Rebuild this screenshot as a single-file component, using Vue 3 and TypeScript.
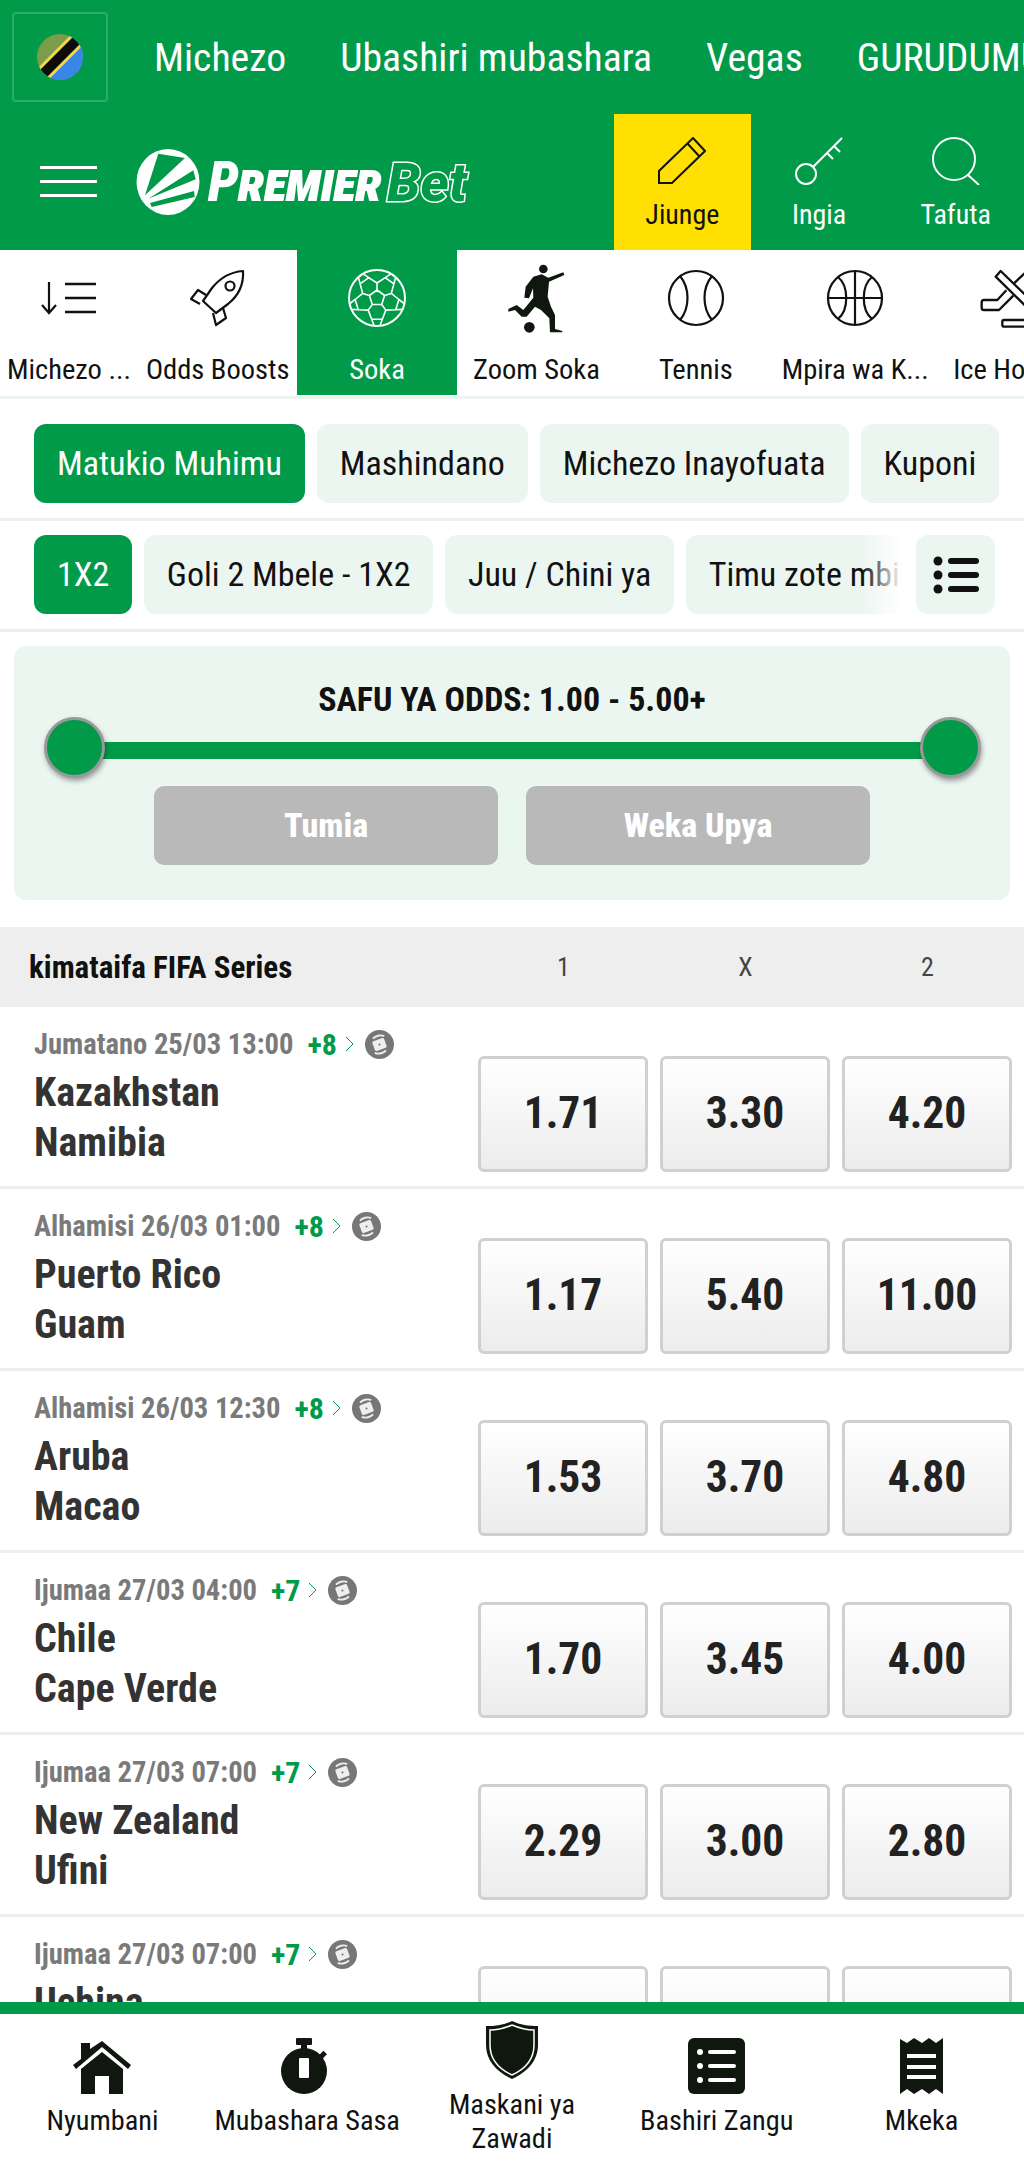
<template>
  <div class="page">
    <!-- top links -->
    <div class="top-links">
      <div class="flag-box">
        <svg width="46" height="46" viewBox="0 0 46 46">
          <defs><clipPath id="flag"><circle cx="23" cy="23" r="23" /></clipPath></defs>
          <g clip-path="url(#flag)">
            <rect width="46" height="46" fill="#7d9c4a" />
            <polygon points="46,0 46,46 0,46" fill="#3a86e8" />
            <line x1="0" y1="46" x2="46" y2="0" stroke="#f2d64b" stroke-width="16" />
            <line x1="0" y1="46" x2="46" y2="0" stroke="#0c0c0c" stroke-width="10" />
          </g>
        </svg>
      </div>
      <span v-for="link in topLinks" :key="link" class="top-link">{{ link }}</span>
    </div>

    <!-- logo row -->
    <div class="brand-row">
      <div class="burger"><i></i><i></i><i></i></div>
      <svg class="logo-mark" width="64" height="66" viewBox="0 0 64 66">
        <ellipse cx="32" cy="33" rx="31.5" ry="33" fill="#fff" />
        <g fill="#009a49">
          <polygon points="22.3,4.7 49,9 9,46.3" />
          <polygon points="57.3,21.3 59.7,30.3 12.3,49.7" />
          <polygon points="58,42 58.7,48 15.7,58 14,54" />
        </g>
      </svg>
      <div class="logo-text"><span class="logo-premier">Premier</span><span class="logo-bet">Bet</span></div>
      <div class="head-actions">
        <div class="head-action join">
          <svg width="48" height="48" viewBox="0 0 48 48" fill="none" stroke="#111" stroke-width="2">
            <path d="M1 46V34L35 1L47 14L14 46Z M29 6L41 19" />
          </svg>
          <span>Jiunge</span>
        </div>
        <div class="head-action">
          <svg width="48" height="48" viewBox="0 0 48 48" fill="none" stroke="#fff" stroke-width="2">
            <circle cx="11" cy="37" r="10" />
            <path d="M18 30L47 1M39 9L45 15M32 16L38 22" />
          </svg>
          <span>Ingia</span>
        </div>
        <div class="head-action">
          <svg width="48" height="48" viewBox="0 0 48 48" fill="none" stroke="#fff" stroke-width="2">
            <circle cx="22" cy="22" r="21" />
            <path d="M36 38L47 48" />
          </svg>
          <span>Tafuta</span>
        </div>
      </div>
    </div>

    <!-- sports strip -->
    <div class="sports">
      <div
        v-for="sport in sports"
        :key="sport.label"
        class="sport"
        :class="{ active: sport.active, first: sport.icon === 'sort' }"
      >
        <svg class="sport-icon" width="60" height="60" viewBox="0 0 60 60" v-html="sportIcons[sport.icon]"></svg>
        <span class="sport-label">{{ sport.label }}</span>
      </div>
    </div>

    <div class="tabs">
      <div v-for="(tab, i) in mainTabs" :key="tab" class="tab" :class="{ on: i === 0 }">{{ tab }}</div>
    </div>

    <div class="tabs markets">
      <div class="market-scroll">
        <div v-for="(tab, i) in marketTabs" :key="tab" class="tab" :class="{ on: i === 0 }">{{ tab }}</div>
      </div>
      <div class="tab list-btn">
        <svg width="46" height="38" viewBox="0 0 46 38" fill="#111">
          <circle cx="5" cy="5" r="4.5" /><circle cx="5" cy="19" r="4.5" /><circle cx="5" cy="33" r="4.5" />
          <rect x="15" y="2" width="31" height="6" rx="3" /><rect x="15" y="16" width="31" height="6" rx="3" /><rect x="15" y="30" width="31" height="6" rx="3" />
        </svg>
      </div>
    </div>

    <!-- odds range -->
    <div class="range-panel">
      <div class="range-title">SAFU YA ODDS: 1.00 - 5.00+</div>
      <div class="slider">
        <div class="track"></div>
        <div class="knob left"></div>
        <div class="knob right"></div>
      </div>
      <div class="range-btns">
        <div class="range-btn">Tumia</div>
        <div class="range-btn">Weka Upya</div>
      </div>
    </div>

    <div class="league">
      <span class="league-name">kimataifa FIFA Series</span>
      <span class="col">1</span><span class="col">X</span><span class="col">2</span>
    </div>

    <div v-for="match in matches" :key="match.home" class="match">
      <div class="match-info">
        <div class="match-meta">
          <span class="when">{{ match.when }}</span>
          <span class="more">{{ match.more }}</span>
          <svg width="9" height="16" viewBox="0 0 9 16" fill="none" stroke="#009a49" stroke-width="1"><path d="M1 1L8 8L1 15" /></svg>
          <svg class="swap" width="29" height="29" viewBox="0 0 28 28">
            <circle cx="14" cy="14" r="14" fill="#777" />
            <g transform="rotate(-20 14 14)">
              <rect x="8" y="9" width="12" height="10" rx="1.5" fill="#eee" />
              <path d="M10 6.5C13 5 18 5 21 8M18 21.5C15 23 10 23 7 20" fill="none" stroke="#eee" stroke-width="1.8" />
              <circle cx="14" cy="14" r="1" fill="#777" />
            </g>
          </svg>
        </div>
        <div class="team">{{ match.home }}</div>
        <div class="team">{{ match.away }}</div>
      </div>
      <div class="odds">
        <div v-for="(odd, i) in match.odds" :key="i" class="odd">{{ odd }}</div>
      </div>
    </div>

    <!-- bottom nav lies over the list -->
    <div class="bottom-nav">
      <div class="nav-item">
        <svg width="58" height="56" viewBox="0 0 58 56" fill="#10170f">
          <path d="M8 2H17V8L29 0L58 24L55 28L29 6L3 28L0 24L8 18Z" transform="translate(0 3)" />
          <path d="M29 14L50 31V56H36V38H22V56H8V31Z" />
        </svg>
        <span>Nyumbani</span>
      </div>
      <div class="nav-item">
        <svg width="56" height="56" viewBox="0 0 56 56" fill="#10170f">
          <rect x="17" y="0" width="16" height="7" rx="1" />
          <rect x="22" y="6" width="6" height="6" />
          <rect x="40" y="15" width="7" height="5" transform="rotate(-45 43 17)" />
          <circle cx="25" cy="33" r="23" />
          <rect x="20" y="20" width="10" height="20" rx="1" fill="#fff" />
        </svg>
        <span>Mubashara Sasa</span>
      </div>
      <div class="nav-item tall">
        <svg width="54" height="58" viewBox="0 0 54 58">
          <path d="M27 0C35 4 44 5 53 5V24C53 40 42 51 27 58C12 51 1 40 1 24V5C10 5 19 4 27 0Z" fill="#10170f" />
          <path d="M27 4C34 7 42 9 49 9V24C49 38 40 48 27 54" fill="none" stroke="#fff" stroke-width="1.5" />
          <path d="M27 4C20 7 12 9 5 9V24C5 38 14 48 27 54" fill="none" stroke="#fff" stroke-width="1.5" />
        </svg>
        <span>Maskani ya<br />Zawadi</span>
      </div>
      <div class="nav-item">
        <svg width="58" height="56" viewBox="0 0 58 56">
          <rect width="57" height="56" rx="6" fill="#10170f" />
          <g fill="#fff">
            <circle cx="12" cy="14" r="3" /><circle cx="12" cy="28" r="3" /><circle cx="12" cy="42" r="3" />
            <rect x="20" y="12" width="28" height="4" rx="2" /><rect x="20" y="26" width="28" height="4" rx="2" /><rect x="20" y="40" width="28" height="4" rx="2" />
          </g>
        </svg>
        <span>Bashiri Zangu</span>
      </div>
      <div class="nav-item">
        <svg width="44" height="56" viewBox="0 0 44 56">
          <path d="M0 1L7 5L14 0L22 5L29 0L36 5L43 0V56L36 51L29 56L22 51L14 56L7 51L0 56Z" fill="#10170f" />
          <g fill="#fff">
            <rect x="7" y="16" width="29" height="4" /><rect x="7" y="27" width="29" height="4" /><rect x="7" y="37" width="29" height="4" />
          </g>
        </svg>
        <span>Mkeka</span>
      </div>
    </div>
  </div>
</template>

<script setup lang="ts">
interface Sport {
  label: string
  icon: string
  active?: boolean
}

interface Match {
  when: string
  more: string
  home: string
  away: string
  odds: string[]
}

const topLinks = ['Michezo', 'Ubashiri mubashara', 'Vegas', 'GURUDUMU']
const mainTabs = ['Matukio Muhimu', 'Mashindano', 'Michezo Inayofuata', 'Kuponi']
const marketTabs = ['1X2', 'Goli 2 Mbele - 1X2', 'Juu / Chini ya', 'Timu zote mbili kufunga']

const sports: Sport[] = [
  { label: 'Michezo ...', icon: 'sort' },
  { label: 'Odds Boosts', icon: 'rocket' },
  { label: 'Soka', icon: 'ball', active: true },
  { label: 'Zoom Soka', icon: 'player' },
  { label: 'Tennis', icon: 'tennis' },
  { label: 'Mpira wa K...', icon: 'basket' },
  { label: 'Ice Hockey', icon: 'hockey' }
]

// soccer ball lines, built from the pentagon corners
const ballPath = () => {
  const pt = (r: number, deg: number) => {
    const a = ((deg - 90) * Math.PI) / 180
    return `${(30 + r * Math.cos(a)).toFixed(1)} ${(30 + r * Math.sin(a)).toFixed(1)}`
  }
  let d = ''
  for (let k = 0; k < 5; k++) {
    const deg = k * 72
    d += `M${pt(8, deg)}L${pt(8, deg + 72)}`
    d += `M${pt(8, deg)}L${pt(15, deg)}`
    d += `M${pt(15, deg)}L${pt(22, deg - 22)}M${pt(15, deg)}L${pt(22, deg + 22)}`
    d += `M${pt(22, deg + 22)}L${pt(22, deg + 50)}`
    d += `M${pt(22, deg + 22)}L${pt(28, deg + 30)}M${pt(22, deg + 50)}L${pt(28, deg + 42)}`
  }
  return d
}

const sportIcons: Record<string, string> = {
  sort: `<g fill="none" stroke="#111" stroke-width="2.2"><path d="M10 14V44M3 37L10 45L17 37"/><path d="M26 16H57M26 30H57M26 44H57" stroke-width="2.6"/></g>`,
  rocket: `<g fill="none" stroke="#111" stroke-width="2.2" stroke-linejoin="round"><path d="M55 3C56 18 50 28 40 36L28 45L15 33L24 20C32 10 42 4 55 3Z"/><circle cx="42" cy="18" r="4.5"/><path d="M18 27L10 22L3 31L12 36M35 40L38 50L28 57L25 45"/></g>`,
  ball: `<g fill="none" stroke="#fff" stroke-width="1.6"><circle cx="30" cy="30" r="28" stroke-width="2"/><path d="${ballPath()}"/></g>`,
  player: `<g transform="translate(-1 -13) scale(.3333)" fill="#10170f"><circle cx="115" cy="42" r="13"/><path d="M85 65L110 58L130 68L175 52L178 60L132 80L128 125L138 155L150 180L150 222L172 228L172 232L135 232L133 190L108 165L90 155L65 185L50 185L30 165L10 170L10 162L35 150L55 165L85 128L84 100L72 130L58 128L62 95Z"/><circle cx="73" cy="217" r="16"/></g>`,
  tennis: `<g fill="none" stroke="#111" stroke-width="2.2"><circle cx="30" cy="30" r="27"/><path d="M14 8C24 20 24 40 14 52M46 8C36 20 36 40 46 52"/></g>`,
  basket: `<g fill="none" stroke="#111" stroke-width="2.2"><circle cx="30" cy="30" r="27"/><path d="M3 30H57M30 3V57M13 9C24 18 24 42 13 51M47 9C36 18 36 42 47 51"/></g>`,
  hockey: `<g transform="translate(-26 -13) scale(.3333)" fill="none" stroke="#111" stroke-width="7" stroke-linejoin="round"><path d="M110 65L125 48L240 160L225 178Z"/><path d="M142 106L115 135H75Q68 135 68 142V158Q68 165 75 165H120L163 122M165 85L215 38"/><rect x="130" y="195" width="110" height="20" rx="5"/></g>`
}

const matches: Match[] = [
  { when: 'Jumatano 25/03 13:00', more: '+8', home: 'Kazakhstan', away: 'Namibia', odds: ['1.71', '3.30', '4.20'] },
  { when: 'Alhamisi 26/03 01:00', more: '+8', home: 'Puerto Rico', away: 'Guam', odds: ['1.17', '5.40', '11.00'] },
  { when: 'Alhamisi 26/03 12:30', more: '+8', home: 'Aruba', away: 'Macao', odds: ['1.53', '3.70', '4.80'] },
  { when: 'Ijumaa 27/03 04:00', more: '+7', home: 'Chile', away: 'Cape Verde', odds: ['1.70', '3.45', '4.00'] },
  { when: 'Ijumaa 27/03 07:00', more: '+7', home: 'New Zealand', away: 'Ufini', odds: ['2.29', '3.00', '2.80'] },
  { when: 'Ijumaa 27/03 07:00', more: '+7', home: 'Uchina', away: 'Curacao', odds: ['', '', ''] }
]
</script>

<style>
body {
  background: #fff;
  overflow: hidden;
}
</style>

<style scoped>
.page {
  position: relative;
  width: 1024px;
  height: 2162px;
  overflow: hidden;
  background: #fff;
  color: #111;
  font-family: "Roboto Condensed", Roboto, "Liberation Sans Narrow", "Liberation Sans", sans-serif;
  font-stretch: 75%;
}

.top-links {
  display: flex;
  align-items: center;
  height: 114px;
  background: #009a49;
  padding: 0 0 0 12px;
  white-space: nowrap;
  overflow: hidden;
  color: #fff;
}

.flag-box {
  flex: none;
  width: 96px;
  height: 90px;
  box-sizing: border-box;
  border: 2px solid rgba(255, 255, 255, 0.18);
  border-radius: 4px;
  display: flex;
  align-items: center;
  justify-content: center;
  margin-right: 46px;
}

.top-link {
  font-size: 39.7px;
  margin-right: 54px;
}

.brand-row {
  display: flex;
  align-items: center;
  height: 136px;
  background: #009a49;
  color: #fff;
}

.burger {
  width: 57px;
  margin-left: 40px;
  margin-right: 39px;
  display: flex;
  flex-direction: column;
  gap: 11px;
  margin-top: -1px;
}

.burger i {
  display: block;
  height: 3px;
  background: #fff;
}

.logo-mark {
  flex: none;
  margin-top: -1px;
}

.logo-text {
  display: flex;
  align-items: baseline;
  margin-left: 8px;
  font-family: Roboto, sans-serif;
  font-stretch: 100%;
  font-style: italic;
  font-weight: 900;
  white-space: nowrap;
}

.logo-premier {
  font-size: 55px;
  font-stretch: 87%;
  font-variant: small-caps;
  letter-spacing: -0.5px;
}

.logo-bet {
  font-size: 54px;
  font-weight: 800;
  margin-left: 5px;
  color: #009a49;
  -webkit-text-stroke: 3px #fff;
  paint-order: stroke fill;
}

.head-actions {
  display: flex;
  margin-left: auto;
  align-self: stretch;
}

.head-action {
  width: 136.67px;
  display: flex;
  flex-direction: column;
  align-items: center;
  padding-top: 23px;
  box-sizing: border-box;
  font-size: 28px;
}

.head-action span {
  margin-top: 13px;
  line-height: 34px;
}

.head-action.join {
  background: #ffe000;
  color: #111;
}

.sports {
  display: flex;
  height: 149px;
  box-sizing: border-box;
  border-bottom: 3px solid #eef5f1;
  overflow: hidden;
}

.sport {
  flex: none;
  width: 159.4px;
  height: 145px;
  display: flex;
  flex-direction: column;
  align-items: center;
  padding-top: 18px;
  box-sizing: border-box;
  font-size: 28.5px;
  white-space: nowrap;
}

.sport.first {
  width: 138px;
}

.sport.active {
  background: #009a49;
  color: #fff;
}

.sport-icon {
  flex: none;
  overflow: visible;
}

.sport-label {
  margin-top: 25px;
  line-height: 34px;
}

.tabs {
  display: flex;
  gap: 12px;
  padding: 25px 0 15px 34px;
  border-bottom: 3px solid #eee;
}

.tab {
  flex: none;
  height: 79px;
  line-height: 79px;
  padding: 0 23px;
  border-radius: 12px;
  background: #ecf6f1;
  font-size: 34px;
  white-space: nowrap;
}

.tab.on {
  background: #009a49;
  color: #fff;
}

.markets {
  padding-top: 14px;
  gap: 14px;
}

.market-scroll {
  position: relative;
  display: flex;
  gap: 11.5px;
  width: 868px;
  overflow: hidden;
}

.market-scroll::after {
  content: "";
  position: absolute;
  top: 0;
  right: 0;
  bottom: 0;
  width: 40px;
  background: linear-gradient(to right, rgba(255, 255, 255, 0), #fff);
}

.list-btn {
  width: 79px;
  padding: 0;
  display: flex;
  align-items: center;
  justify-content: center;
}

.range-panel {
  margin: 14px 14px 0;
  height: 254px;
  box-sizing: border-box;
  padding-top: 33px;
  background: #ecf6f1;
  border-radius: 12px;
}

.range-title {
  text-align: center;
  font-size: 34px;
  font-weight: 700;
  line-height: 40px;
}

.slider {
  position: relative;
  height: 60px;
  margin: -2px 29px 0 30px;
}

.track {
  position: absolute;
  top: 25px;
  left: 30px;
  right: 30px;
  height: 17px;
  background: #009a49;
}

.knob {
  position: absolute;
  top: 0;
  width: 61px;
  height: 61px;
  box-sizing: border-box;
  border: 3px solid #999;
  border-radius: 50%;
  background: #009a49;
  box-shadow: 1px 3px 5px rgba(0, 0, 0, 0.35);
}

.knob.left {
  left: 0;
}

.knob.right {
  right: 0;
}

.range-btns {
  display: flex;
  justify-content: center;
  gap: 28px;
  margin-top: 9px;
}

.range-btn {
  width: 344px;
  height: 79px;
  line-height: 79px;
  text-align: center;
  background: #b9b9b9;
  border-radius: 10px;
  color: #fff;
  font-size: 34px;
  font-weight: 800;
}

.league {
  display: flex;
  align-items: center;
  height: 80px;
  margin-top: 27px;
  background: #eee;
  padding-left: 29px;
}

.league-name {
  flex: 1;
  font-size: 31px;
  font-weight: 700;
}

.col {
  width: 182px;
  text-align: center;
  font-size: 26px;
  color: #444;
}

.col:last-child {
  margin-right: 5.5px;
}

.match {
  display: flex;
  height: 182px;
  box-sizing: border-box;
  border-bottom: 3px solid #eee;
  padding: 0 12px 0 34px;
  flex-shrink: 0;
}

.match-info {
  flex: 1;
  padding-top: 20px;
}

.match-meta {
  display: flex;
  align-items: center;
  height: 34px;
  gap: 8px;
  font-size: 28.6px;
  font-weight: 700;
  color: #7a7a7a;
}

.more {
  margin-left: 6px;
  font-size: 30px;
  color: #009a49;
}

.swap {
  margin-left: 3px;
}

.team {
  font-size: 40px;
  font-weight: 700;
  line-height: 50px;
  color: #333;
}

.match-meta + .team {
  margin-top: 7px;
}

.odds {
  display: flex;
  gap: 12px;
  padding-top: 49px;
}

.odd {
  width: 170px;
  height: 116px;
  line-height: 110px;
  box-sizing: border-box;
  text-align: center;
  border: 3px solid #d0d0d0;
  border-radius: 6px;
  background: linear-gradient(to bottom, #fff, #ececec);
  font-size: 43.5px;
  font-weight: 700;
  color: #222;
}

.bottom-nav {
  position: absolute;
  left: 0;
  right: 0;
  bottom: 0;
  height: 160px;
  box-sizing: border-box;
  border-top: 12px solid #009a49;
  background: #fff;
  display: flex;
}

.nav-item {
  flex: 1;
  display: flex;
  flex-direction: column;
  align-items: center;
  padding-top: 24px;
  font-size: 28.3px;
  line-height: 34px;
  text-align: center;
  white-space: nowrap;
}

.nav-item span {
  margin-top: 10px;
}

.nav-item.tall {
  padding-top: 7px;
}

.nav-item.tall span {
  margin-top: 9px;
}
</style>
